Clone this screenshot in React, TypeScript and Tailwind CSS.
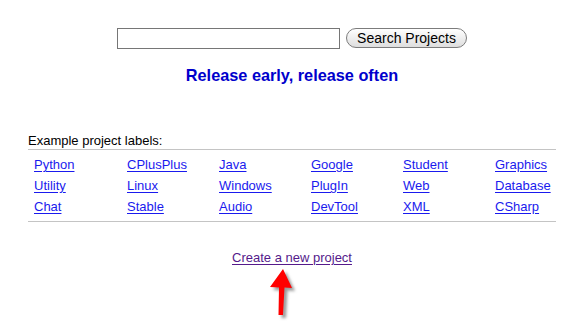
const labels = [
  ['Python', 'CPlusPlus', 'Java', 'Google', 'Student', 'Graphics'],
  ['Utility', 'Linux', 'Windows', 'PlugIn', 'Web', 'Database'],
  ['Chat', 'Stable', 'Audio', 'DevTool', 'XML', 'CSharp'],
]

function Arrow() {
  return (
    <svg width="40" height="58" viewBox="0 0 40 58" className="absolute left-[264px] top-[265px]">
      <defs>
        <filter id="shadow" x="-50%" y="-50%" width="200%" height="200%">
          <feGaussianBlur stdDeviation="1.6" />
        </filter>
      </defs>
      <polygon
        points="19,4 28,23 20.5,22.5 19,50 14.5,50 15,22.5 6,22"
        fill="#9a9a9a"
        transform="translate(3,3)"
        filter="url(#shadow)"
      />
      <polygon points="19,4 28,23 20.5,22.5 19,50 14.5,50 15,22.5 6,22" fill="#ff0000" />
    </svg>
  )
}

export default function App() {
  return (
    <div className="relative w-[572px] h-[321px] bg-white font-['Liberation_Sans',Arial,sans-serif] text-[13px] leading-[15px] text-black overflow-hidden">
      {/* Search */}
      <div className="flex justify-center items-start gap-[6px] pl-[12px] pt-[28px]">
        <input type="text" className="w-[223px] h-[21px] border border-[#767676] bg-white outline-none" />
        <button className="w-[121px] h-[20px] rounded-full border border-[#7c7c7c] bg-gradient-to-b from-white to-[#dedede] text-[14px] leading-[18px] text-black">
          Search Projects
        </button>
      </div>

      <h1 className="mt-[17px] pl-[12px] text-center text-[16.3px] leading-[19px] font-bold text-[#0000cc]">
        Release early, release often
      </h1>

      {/* Labels */}
      <div className="ml-[28px] w-[528px] mt-[48px]">
        <div className="pb-[1px]">Example project labels:</div>
        <div className="border-t border-b border-[#c4c4c4] pl-[6px] pt-[4px] pb-[4px]">
          <div className="grid grid-cols-[93px_92px_92px_92px_92px_60px] leading-[21px]">
            {labels.flat().map((l) => (
              <div key={l}>
                <a href="#" className="text-[#1a1aee] underline underline-offset-[2px]">
                  {l}
                </a>
              </div>
            ))}
          </div>
        </div>
      </div>

      <div className="mt-[28px] pl-[12px] text-center">
        <a href="#" className="text-[#551a8b] underline underline-offset-[2px]">
          Create a new project
        </a>
      </div>

      <Arrow />
    </div>
  )
}
